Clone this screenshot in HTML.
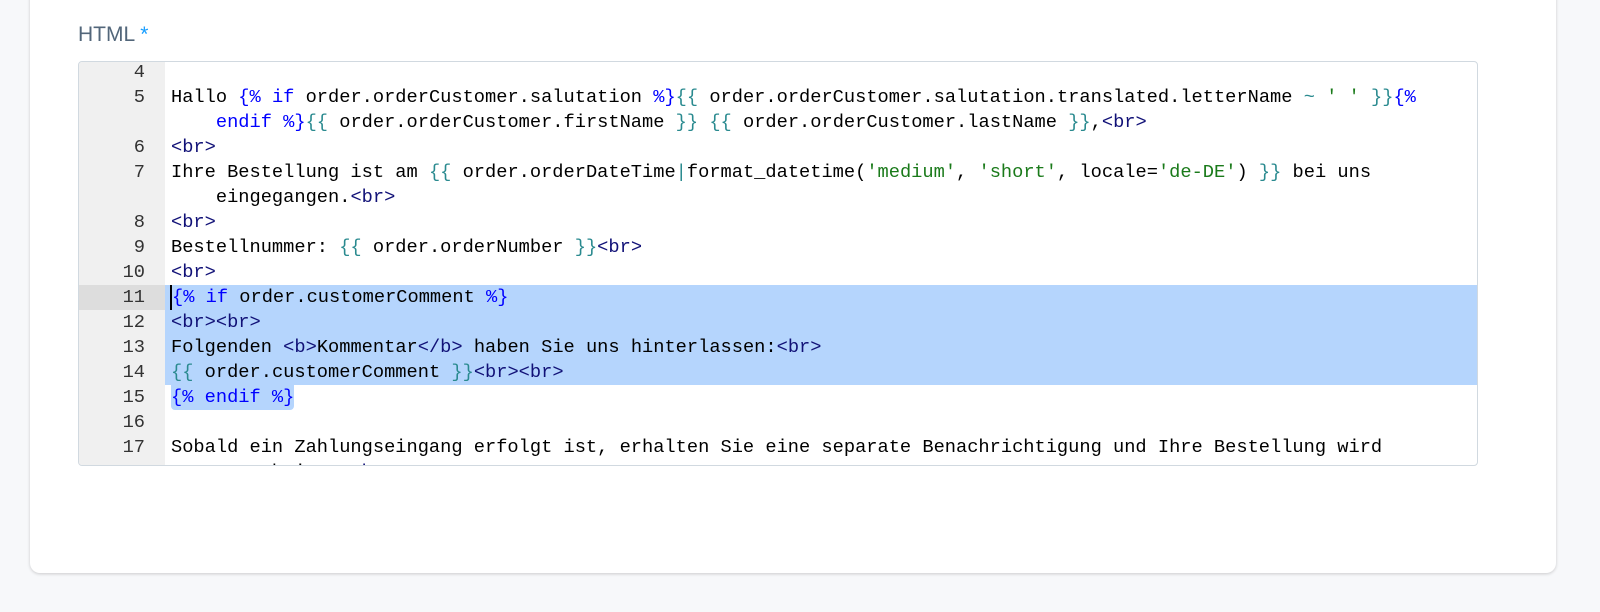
<!DOCTYPE html>
<html><head><meta charset="utf-8"><style>
body{margin:0;width:1600px;height:612px;background:#f7f8fa;overflow:hidden;font-family:"Liberation Sans",sans-serif}
.card{position:absolute;left:30px;top:-20px;width:1526px;height:593px;background:#fff;border-radius:10px;box-shadow:0 1px 3px rgba(0,0,0,.18)}
.lbl{position:absolute;left:78px;top:23px;font-size:21px;color:#52667a}
.lbl span{color:#189eff}
.ed{position:absolute;left:78px;top:61px;width:1398px;height:403px;border:1px solid #d1d9e0;border-radius:4px;overflow:hidden;background:#fff}
.gut{position:absolute;left:0;top:0;width:86px;height:100%;background:#f0f0f0}
.code{position:absolute;left:0;top:-2px;width:100%;font-family:"Liberation Mono",monospace;font-size:18.7px;color:#000}
.l{position:relative;height:25px;line-height:25px;white-space:pre}
.n{position:absolute;left:0;width:66px;text-align:right;color:#333}
.t{position:absolute;left:92px}
.sel{background:#b5d5fd}
.k{color:#0000ff}.g{color:#117}.b{color:#2a8a8f}.s{color:#1a7a1a}
</style></head><body>
<div class="card"></div>
<div class="lbl">HTML <span>*</span></div>
<div class="ed"><div class="gut"></div>
<div class="code">
<div class="l"><span class="n">4</span></div>
<div class="l"><span class="n">5</span><span class="t">Hallo <span class="k">{% if</span> order.orderCustomer.salutation <span class="k">%}</span><span class="b">{{</span> order.orderCustomer.salutation.translated.letterName <span class="b">~</span> <span class="s">' '</span> <span class="b">}}</span><span class="k">{%</span></span></div>
<div class="l"><span class="t">    <span class="k">endif %}</span><span class="b">{{</span> order.orderCustomer.firstName <span class="b">}}</span> <span class="b">{{</span> order.orderCustomer.lastName <span class="b">}}</span>,<span class="g">&lt;br&gt;</span></span></div>
<div class="l"><span class="n">6</span><span class="t"><span class="g">&lt;br&gt;</span></span></div>
<div class="l"><span class="n">7</span><span class="t">Ihre Bestellung ist am <span class="b">{{</span> order.orderDateTime<span class="b">|</span>format_datetime(<span class="s">'medium'</span>, <span class="s">'short'</span>, locale=<span class="s">'de-DE'</span>) <span class="b">}}</span> bei uns</span></div>
<div class="l"><span class="t">    eingegangen.<span class="g">&lt;br&gt;</span></span></div>
<div class="l"><span class="n">8</span><span class="t"><span class="g">&lt;br&gt;</span></span></div>
<div class="l"><span class="n">9</span><span class="t">Bestellnummer: <span class="b">{{</span> order.orderNumber <span class="b">}}</span><span class="g">&lt;br&gt;</span></span></div>
<div class="l"><span class="n">10</span><span class="t"><span class="g">&lt;br&gt;</span></span></div>
<div class="l sel" style="margin-left:86px"><span class="n" style="left:-86px;width:86px;background:#ddd"><span style="padding-right:20px">11</span></span><span class="t" style="left:6px;border-left:2px solid #000;margin-left:-1px"><span class="k">{% if</span> order.customerComment <span class="k">%}</span></span></div>
<div class="l sel" style="margin-left:86px"><span class="n" style="left:-86px;background:#f0f0f0;width:86px"><span style="padding-right:20px">12</span></span><span class="t" style="left:6px"><span class="g">&lt;br&gt;&lt;br&gt;</span></span></div>
<div class="l sel" style="margin-left:86px"><span class="n" style="left:-86px;background:#f0f0f0;width:86px"><span style="padding-right:20px">13</span></span><span class="t" style="left:6px">Folgenden <span class="g">&lt;b&gt;</span>Kommentar<span class="g">&lt;/b&gt;</span> haben Sie uns hinterlassen:<span class="g">&lt;br&gt;</span></span></div>
<div class="l sel" style="margin-left:86px"><span class="n" style="left:-86px;background:#f0f0f0;width:86px"><span style="padding-right:20px">14</span></span><span class="t" style="left:6px"><span class="b">{{</span> order.customerComment <span class="b">}}</span><span class="g">&lt;br&gt;&lt;br&gt;</span></span></div>
<div class="l"><span class="n">15</span><span class="t sel" style="border-radius:0 0 4px 4px"><span class="k">{% endif %}</span></span></div>
<div class="l"><span class="n">16</span></div>
<div class="l"><span class="n">17</span><span class="t">Sobald ein Zahlungseingang erfolgt ist, erhalten Sie eine separate Benachrichtigung und Ihre Bestellung wird</span></div>
<div class="l"><span class="t">    verarbeitet.<span class="g">&lt;br&gt;</span></span></div>
</div></div>
</body></html>
